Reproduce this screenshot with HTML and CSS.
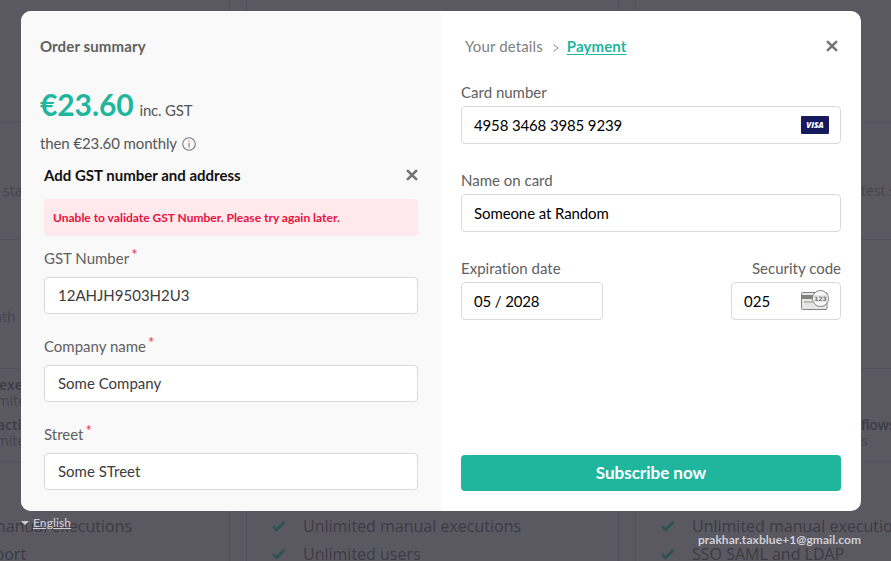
FILE: index.html
```html
<!DOCTYPE html>
<html lang="en">
<head>
<meta charset="utf-8">
<title>Checkout</title>
<link rel="stylesheet" href="styles.css">
</head>
<body>
<div class="backdrop" aria-hidden="true">
<div class="plans">
  <section class="plan">
    <div class="plan-head"></div>
    <div class="plan-intro"><span class="intro-start">started</span></div>
    <div class="plan-price"><span class="per-month">month</span></div>
    <div class="plan-limits">
      <p class="limit-one"><b>executions</b><span>Unlimited</span></p>
      <p class="limit-two"><b>active</b><span>Unlimited</span></p>
    </div>
    <ul class="features">
      <li><svg viewBox="0 0 14 12"><path d="M1 6.2 4.6 9.8 12.4 1.8"/></svg>Unlimited manual executions</li>
      <li><svg viewBox="0 0 14 12"><path d="M1 6.2 4.6 9.8 12.4 1.8"/></svg>Forum support</li>
    </ul>
  </section>
  <section class="plan">
    <div class="plan-head"></div><div class="plan-intro"></div><div class="plan-price"></div><div class="plan-limits"></div>
    <ul class="features">
      <li><svg viewBox="0 0 14 12"><path d="M1 6.2 4.6 9.8 12.4 1.8"/></svg>Unlimited manual executions</li>
      <li><svg viewBox="0 0 14 12"><path d="M1 6.2 4.6 9.8 12.4 1.8"/></svg>Unlimited users</li>
    </ul>
  </section>
  <section class="plan">
    <div class="plan-head"></div>
    <div class="plan-intro"><span class="intro-end">test security</span></div>
    <div class="plan-price"></div>
    <div class="plan-limits">
      <p class="limit-end"><b>flows</b><span>s</span></p>
    </div>
    <ul class="features">
      <li><svg viewBox="0 0 14 12"><path d="M1 6.2 4.6 9.8 12.4 1.8"/></svg>Unlimited manual executions</li>
      <li><svg viewBox="0 0 14 12"><path d="M1 6.2 4.6 9.8 12.4 1.8"/></svg>SSO SAML and LDAP</li>
    </ul>
  </section>
</div>
</div>

<div class="overlay">
  <main class="modal">
    <section class="summary">
      <h2>Order summary</h2>
      <p class="price"><strong>€23.60</strong> <span>inc. GST</span></p>
      <p class="then">then €23.60 monthly
        <svg class="info" viewBox="0 0 14 14"><circle cx="7" cy="7" r="6.3"/><path d="M7 6v4.4M7 3.4v1.3"/></svg>
      </p>
      <div class="tax">
        <div class="tax-head"><h3>Add GST number and address</h3>
          <svg class="close" viewBox="0 0 12 12"><path d="M1.8 1.8l8.4 8.4M10.2 1.8l-8.4 8.4"/></svg></div>
        <p class="error">Unable to validate GST Number. Please try again later.</p>
        <div class="field"><label>GST Number<sup>*</sup></label><div class="box">12AHJH9503H2U3</div></div>
        <div class="field"><label>Company name<sup>*</sup></label><div class="box">Some Company</div></div>
        <div class="field"><label>Street<sup>*</sup></label><div class="box">Some STreet</div></div>
      </div>
    </section>
    <section class="payment">
      <header class="crumbs">
        <span>Your details</span>
        <svg class="chevron" viewBox="0 0 6 8"><path d="M.6.6 5 4 .6 7.4"/></svg>
        <a>Payment</a>
        <svg class="close" viewBox="0 0 12 12"><path d="M1.8 1.8l8.4 8.4M10.2 1.8l-8.4 8.4"/></svg>
      </header>
      <div class="field"><label>Card number</label><div class="box"><span class="digits">4958 3468 3985 9239</span><span class="visa">VISA</span></div></div>
      <div class="field"><label>Name on card</label><div class="box name">Someone at Random</div></div>
      <div class="pair">
        <div class="field expiry"><label>Expiration date</label><div class="box"><span class="digits">05 / 2028</span></div></div>
        <div class="field code"><label>Security code</label><div class="box">025
          <svg class="cvv" viewBox="0 0 28 20"><rect x=".5" y="2.5" width="25.5" height="17" rx="1" fill="#e6e6e6" stroke="#828282"/><path fill="#828282" d="M1 5h24v4H1z"/><path fill="#bcbcbc" d="M3 11h10v2H3z"/><circle cx="19.5" cy="8.5" r="8" fill="#f8f8f8" stroke="#828282"/><path fill="#e6e6e6" d="M12.7 5h13.6v7H12.7z"/><text x="19.5" y="11">123</text></svg>
        </div></div>
      </div>
      <button>Subscribe now</button>
    </section>
  </main>
  <footer><span class="lang"><i></i><u>English</u></span><span class="email">prakhar.taxblue+1@gmail.com</span></footer>
</div>
</body>
</html>
```

FILE: styles.css
```css
* { box-sizing: border-box; }
body { margin: 0; width: 891px; height: 561px; position: relative; background: #5a5962; font-family: Lato, sans-serif; font-size: 15px; color: #555; font-variant-ligatures: none; }
p, h2, h3, ul { margin: 0; padding: 0; }
svg { display: block; flex: none; fill: none; }

.backdrop { width: 891px; height: 561px; overflow: hidden; }
.plans { display: grid; grid-template-columns: repeat(3, 373px); gap: 16px; width: 1151px; margin-left: -143px; height: 561px; font-family: "Open Sans", sans-serif; font-size: 14px; line-height: 20px; color: #45444c; }
.plan { border: solid #53525c; border-width: 0 1px; white-space: nowrap; }
.plan-head { height: 123px; border-bottom: 1px solid #53525c; }
.plan-intro { height: 117px; padding-top: 58px; border-bottom: 1px solid #53525c; }
.plan-price { height: 129px; padding-top: 67px; border-bottom: 1px solid #53525c; }
.plan-limits { height: 93px; padding-top: 8px; border-bottom: 1px solid #53525c; line-height: 16px; }
.plan-limits p { height: 40px; }
.plan-limits b { display: block; font-weight: 600; color: #3d3c45; }
.intro-start { margin-left: 145px; }
.intro-end { margin-left: 225px; }
.per-month { margin-left: 114px; }
.limit-one b { margin-left: 141px; }
.limit-two b { margin-left: 139px; }
.limit-one span { margin-left: 113px; }
.limit-two span { margin-left: 112px; }
.plan-limits .limit-end { margin: 40px 0 0 225px; }
.limit-end b { letter-spacing: -.3px; }
.features { list-style: none; padding: 50px 0 0 25px; font-size: 16px; line-height: 28px; color: #3c3b44; }
.features li { display: flex; align-items: center; gap: 17px; }
.features svg { width: 14px; height: 12px; stroke: #2e5350; stroke-width: 2.8; }

.overlay { position: absolute; inset: 0; padding: 11px 30px 0 21px; }
.modal { display: flex; height: 500px; background: #fff; border-radius: 10px; overflow: hidden; }
.summary { width: 420px; background: #f9f9f9; padding: 25px 23px 0 19px; }
h2 { font-size: 15px; font-weight: 700; line-height: 20px; letter-spacing: .12px; color: #606060; }
.price { display: flex; align-items: baseline; gap: 6px; margin-top: 29px; line-height: 38px; }
.price strong { font-size: 30px; font-weight: 700; letter-spacing: -.1px; color: #20b69e; }
.price span { letter-spacing: -.2px; }
.then { display: flex; align-items: center; gap: 5px; margin-top: 4px; line-height: 20px; letter-spacing: -.1px; }
.info { width: 14px; height: 14px; margin-top: 1px; stroke: #777; stroke-width: 1.1; }
.tax { margin-left: 4px; margin-top: 12px; }
.tax-head { display: flex; align-items: center; justify-content: space-between; line-height: 20px; }
h3 { font-size: 15px; font-weight: 700; color: #111; }
.close { width: 12px; height: 12px; stroke: #757575; stroke-width: 2.6; stroke-linecap: round; }
.error { height: 37px; margin: 14px 0 12px; padding-left: 9px; border-radius: 4px; background: #ffe9ec; color: #e8123e; font-size: 12px; font-weight: 700; line-height: 37px; }
.field { height: 88px; }
.field label { display: block; height: 29px; line-height: 20px; color: #606060; }
.field sup { margin-left: 2px; color: #e8304f; font-size: 15px; line-height: 0; vertical-align: 4px; }
.box { display: flex; align-items: center; justify-content: space-between; height: 37px; padding: 0 13px 1px; background: #fff; border: 1px solid #d9d9d9; border-radius: 4px; color: #3c3c3c; }

.payment { flex: 1; display: flex; flex-direction: column; padding: 25px 20px 20px; }
.crumbs { display: flex; align-items: center; height: 20px; margin-bottom: 26px; padding-left: 4px; letter-spacing: .12px; color: #808080; }
.chevron { width: 6px; height: 8px; margin: 3px 8px 0 10px; stroke: #858585; stroke-width: 1; }
.crumbs a { color: #20b69e; font-weight: 700; text-decoration: underline; text-underline-offset: 2px; }
.crumbs .close { margin: 0 3px 0 auto; }
.payment .field label { height: 24px; }
.payment .box { height: 38px; padding: 0 11px 0 12px; color: #000; }
.digits { letter-spacing: -.14px; }
.payment .name { letter-spacing: -.1px; }
.pair { display: flex; justify-content: space-between; }
.expiry { width: 142px; }
.code { width: 110px; }
.code label { text-align: right; }
.visa { width: 28px; height: 18px; border-radius: 1px; background: #171b5b; color: #fff; font: italic 800 8px/18px "Open Sans", sans-serif; text-align: center; }
.cvv { width: 28px; height: 20px; margin-top: -3px; }
.cvv text { fill: #777; font: 700 6px "DejaVu Sans", sans-serif; text-anchor: middle; }
button { height: 36px; margin-top: auto; padding: 0 0 2px; border: 0; border-radius: 4px; background: #20b69e; color: #fff; font: 700 17px Lato, sans-serif; }
footer { display: flex; justify-content: space-between; height: 40px; color: #cfced6; font-size: 12px; font-weight: 700; }
.lang { display: flex; align-items: center; gap: 4px; height: 23px; font-weight: 500; letter-spacing: .1px; }
.lang i { border: 4px solid transparent; border-top-color: #cfced6; border-bottom: 0; }
.email { align-self: flex-end; line-height: 22px; letter-spacing: .07px; }
```
